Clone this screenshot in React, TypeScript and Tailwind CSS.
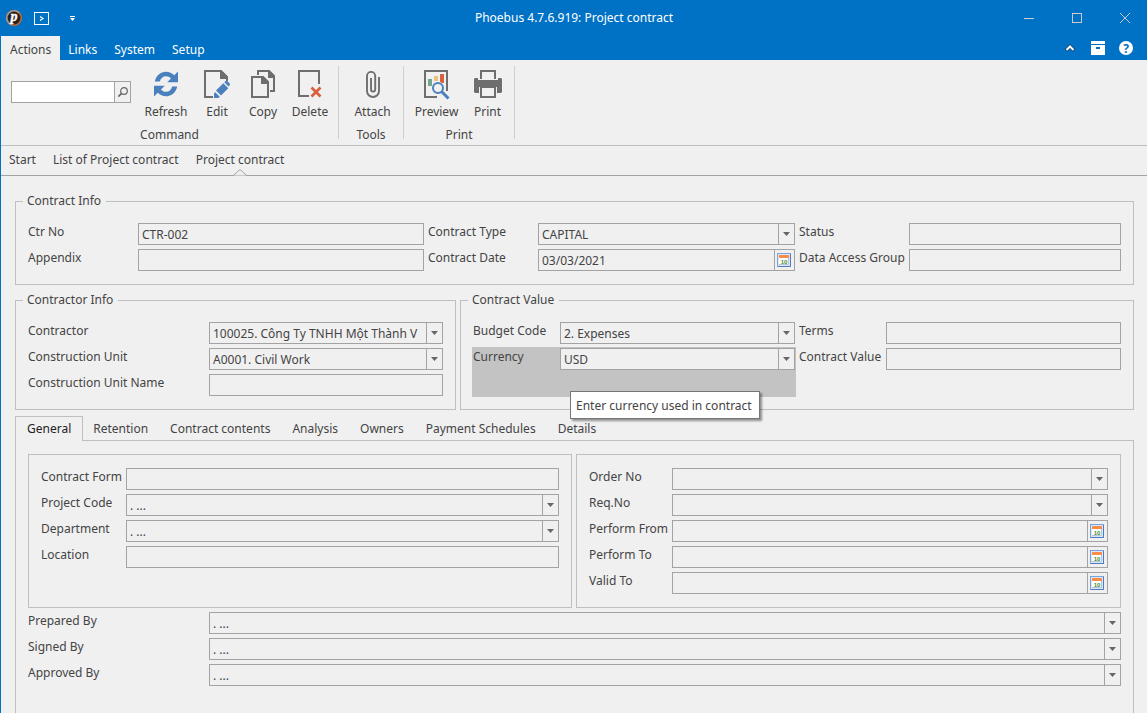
import { useId, useState } from 'react';
import type { ReactNode } from 'react';

const FIELD_BOX = 'h-[22px] w-full border border-[#a3a3a3] bg-[#f0f0f0] px-[3px] text-xs text-[#444]';

/* ---------- icons ---------- */

function LogoIcon() {
  return (
    <svg width="16" height="16" viewBox="0 0 16 16">
      <circle cx="8" cy="8" r="8" fill="#b8683a" />
      <path d="M2.300 13.700A8 8 0 0 1 13.700 2.300z" fill="#a09a94" />
      <circle cx="8" cy="8" r="6.400" fill="#2c211d" />
      <text
        x="8"
        y="11"
        textAnchor="middle"
        fontSize="14"
        fontWeight="700"
        fontStyle="italic"
        fontFamily="Liberation Serif, serif"
        fill="#fff"
        stroke="#fff"
        strokeWidth=".4"
      >
        p
      </text>
    </svg>
  );
}

function RefreshIcon() {
  const arrow =
    'M.8 10.6C2 4.6 6.6.8 12 .8c3.2 0 6 1.2 8.2 3.4L24 .6v10.7H13.2l3.8-3.8C15.7 6 14 5.2 12 5.2c-3 0-5.3 2-6.2 5.4z';
  return (
    <svg width="24" height="28" viewBox="0 -1 24 28" fill="#4a80bb">
      <path d={arrow} />
      <path d={arrow} transform="rotate(180 12 13)" />
    </svg>
  );
}

function EditIcon() {
  return (
    <svg width="26" height="28" viewBox="0 0 26 28">
      <path d="M9 27H1V1h16l6 6v4" fill="none" stroke="#6e6e6e" strokeWidth="2" />
      <path d="M16 0h1l7 7v2h-8z" fill="#6e6e6e" />
      <path d="M10 28v-4l1-2 5 5-2 1zM12 20.5l7.3-7.3 5 5L17 25.500zM20.300 12.200l1-1q1.200-.8 2.200 0l2 2q1 1.200 0 2.200l-1 1z" fill="#4a80bb" />
    </svg>
  );
}

function CopyIcon() {
  return (
    <svg width="24" height="28" viewBox="0 0 24 28" fill="none" stroke="#6e6e6e" strokeWidth="2">
      <path d="M7 5V1h11l5 5v15h-4" />
      <path d="M17 0h1l6 6v2h-7z" fill="#6e6e6e" stroke="none" />
      <path d="M1 7h11l5 5v15H1z" />
      <path d="M10 6h2l6 6v2h-8z" fill="#6e6e6e" stroke="none" />
    </svg>
  );
}

function DeleteIcon() {
  return (
    <svg width="24" height="28" viewBox="0 0 24 28" fill="none">
      <path d="M11 26H1V1h20v13" stroke="#6e6e6e" strokeWidth="2" />
      <path d="m13.500 17.500 9 9m0-9-9 9" stroke="#d9603f" strokeWidth="2.800" />
    </svg>
  );
}

function AttachIcon() {
  return (
    <svg width="14" height="28" viewBox="0 0 14 28" fill="none" stroke="#6e6e6e" strokeWidth="1.900">
      <path d="M5 8v11.500a2 2 0 0 0 4.200 0V6A4.100 4.100 0 0 0 1 6v15a6 6 0 0 0 12 0V7" />
    </svg>
  );
}

function PreviewIcon() {
  return (
    <svg width="26" height="30" viewBox="0 0 26 30">
      <path d="M13 27H1V1h22v20" fill="none" stroke="#6e6e6e" strokeWidth="2" />
      <path d="M4 9h4v7H4z" fill="#74a58f" />
      <path d="M10 6h4v5h-4z" fill="#ebc27c" />
      <path d="M16 4h4v9h-4z" fill="#d9603f" />
      <circle cx="14" cy="18" r="6.500" fill="#f0f0f0" />
      <circle cx="14" cy="18" r="5" fill="#f0f0f0" stroke="#4a80bb" strokeWidth="2" />
      <path d="m17.500 21.500 7 7" stroke="#4a80bb" strokeWidth="3" />
    </svg>
  );
}

function PrintIcon() {
  return (
    <svg width="28" height="28" viewBox="0 0 28 28">
      <path d="M7 9V1h14v8" fill="none" stroke="#6e6e6e" strokeWidth="2" />
      <path d="M1 8h3v2h20V8h3l1 1v13l-1 1h-4v-6H5v6H1l-1-1V9z" fill="#6e6e6e" />
      <path d="M7 17h14v10H7z" fill="#f0f0f0" stroke="#6e6e6e" strokeWidth="2" />
    </svg>
  );
}

function CalendarIcon() {
  return (
    <svg width="14" height="14" viewBox="0 0 14 14">
      <rect x=".5" y=".5" width="13" height="13" fill="#dce7f6" stroke="#7aa3dc" />
      <path d="M13.500 1v12.500H1" fill="none" stroke="#4d7cc4" />
      <rect x="2" y="2" width="10" height="10" fill="#fff" />
      <path d="M11.500 5v6.500H2" fill="none" stroke="#b5c4da" />
      <rect x="2" y="2" width="10" height="3" fill="#fa8d48" />
      <text x="7" y="10.500" textAnchor="middle" fontSize="6" fontWeight="700" fontFamily="Liberation Sans, sans-serif" fill="#3f9030">
        10
      </text>
    </svg>
  );
}

/* ---------- form fields ---------- */

interface FieldProps {
  label: string;
  labelWidth: string;
  value?: string;
  kind?: 'text' | 'select' | 'date';
}

function Field({ label, labelWidth, value = '', kind = 'text' }: FieldProps) {
  const id = useId();

  return (
    <div className="flex h-[22px]">
      <label htmlFor={id} className={`${labelWidth} shrink-0 whitespace-nowrap text-xs leading-[18px]`}>
        {label}
      </label>
      <div className="relative min-w-0 flex-1">
        {kind === 'select' ? (
          <>
            <select id={id} defaultValue={value} className={`${FIELD_BOX} block appearance-none pr-[17px] pt-[2px]`}>
              <option value={value}>{value}</option>
            </select>
            <span className="pointer-events-none absolute inset-y-0 right-0 flex w-[17px] items-center justify-center border border-[#a3a3a3]">
              <svg width="7" height="4" viewBox="0 0 7 4" fill="#666">
                <path d="M0 0h7L3.500 4z" />
              </svg>
            </span>
          </>
        ) : (
          <input id={id} type="text" defaultValue={value} className={FIELD_BOX} />
        )}
        {kind === 'date' && (
          <button
            type="button"
            aria-label={`Pick ${label}`}
            className="absolute inset-y-0 right-0 flex w-[21px] items-center justify-center border border-[#a3a3a3] pr-px"
          >
            <CalendarIcon />
          </button>
        )}
      </div>
    </div>
  );
}

function Group({ title, children }: { title: string; children: ReactNode }) {
  return (
    <fieldset className="min-w-0 border border-[#bfbfbf] pl-[7px]">
      <legend className="pl-1 pr-[5px] text-xs leading-4">{title}</legend>
      <div className="pb-[13px] pl-[5px] pr-3 pt-[14px]">{children}</div>
    </fieldset>
  );
}

/* ---------- ribbon ---------- */

interface RibbonButtonProps {
  label: string;
  width: string;
  icon: ReactNode;
}

function RibbonButton({ label, width, icon }: RibbonButtonProps) {
  return (
    <button type="button" className={`${width} flex flex-col items-center`}>
      <span className="flex h-[30px] items-start">{icon}</span>
      <span className="pt-1 leading-4">{label}</span>
    </button>
  );
}

function RibbonGroup({ title, className, children }: { title: string; className?: string; children: ReactNode }) {
  return (
    <div className={`flex h-[73px] flex-col justify-between border-r border-[#cfcfcf] ${className ?? ''}`}>
      <div className="flex justify-center pl-[3px] pt-1">{children}</div>
      <div className="text-center leading-[8px]">{title}</div>
    </div>
  );
}

function TitleBar() {
  return (
    <div className="grid h-9 grid-cols-[1fr_auto_1fr] items-center text-white">
      <div className="flex items-center pl-[5px]">
        <LogoIcon />
        <button type="button" aria-label="Run" className="ml-3">
          <svg width="15" height="13" viewBox="0 0 15 13" fill="none" stroke="#fff">
            <rect x=".5" y=".5" width="14" height="12" />
            <path d="m6 4.500 3 2-3 2" strokeWidth="1.200" />
          </svg>
        </button>
        <button type="button" aria-label="Customize toolbar" className="ml-[21px]">
          <svg width="5" height="5" viewBox="0 0 5 5" fill="#fff">
            <path d="M0 0h5v1H0zM0 2h5L2.500 5z" />
          </svg>
        </button>
      </div>
      <h1 className="text-xs">Phoebus 4.7.6.919: Project contract</h1>
      <div className="flex items-center justify-end gap-[38px] pr-[17px]">
        <button type="button" aria-label="Minimize">
          <svg width="10" height="10" viewBox="0 0 10 10" stroke="#c8ccd0">
            <path d="M0 5.500h10" />
          </svg>
        </button>
        <button type="button" aria-label="Maximize">
          <svg width="10" height="10" viewBox="0 0 10 10" fill="none" stroke="#c8ccd0">
            <rect x=".5" y=".5" width="9" height="9" />
          </svg>
        </button>
        <button type="button" aria-label="Close">
          <svg width="10" height="10" viewBox="0 0 10 10" stroke="#c8ccd0">
            <path d="m0 0 10 10M10 0 0 10" />
          </svg>
        </button>
      </div>
    </div>
  );
}

function RibbonTabs() {
  const [active, setActive] = useState('Actions');

  return (
    <div className="flex h-6 justify-between">
      <nav className="flex">
        {['Actions', 'Links', 'System', 'Setup'].map((tab) => (
          <button
            key={tab}
            type="button"
            onClick={() => setActive(tab)}
            className={`pt-[3px] ${tab === active ? 'bg-[#f0f0f0] px-[9px] text-[#444]' : 'pl-2 pr-[9px] text-white'}`}
          >
            {tab}
          </button>
        ))}
      </nav>
      <div className="flex items-center pr-[14px]">
        <button type="button" aria-label="Collapse ribbon">
          <svg width="10" height="8" viewBox="0 0 10 8" fill="none">
            <path d="m1 6.500 4-4 4 4" stroke="#12436e" strokeWidth="3.500" />
            <path d="m1.500 6 3.500-3.500L8.500 6" stroke="#fff" strokeWidth="2" />
          </svg>
        </button>
        <button type="button" aria-label="Window layout" className="ml-4">
          <svg width="14" height="14" viewBox="0 0 14 14" fill="#fff">
            <path d="M0 0h14v3H0zM0 4h14v10H0zM5 6v2h4V6z" fillRule="evenodd" />
          </svg>
        </button>
        <button type="button" aria-label="Help" className="ml-[14px]">
          <svg width="14" height="14" viewBox="0 0 14 14">
            <circle cx="7" cy="7" r="7" fill="#fff" />
            <text x="7" y="11.500" textAnchor="middle" fontSize="12" fontWeight="700" fontFamily="Noto Sans, sans-serif" fill="#0072c6">
              ?
            </text>
          </svg>
        </button>
      </div>
    </div>
  );
}

function Ribbon() {
  return (
    <div className="flex h-[86px] border-b border-[#bfbfbf] pt-[6px]">
      <RibbonGroup title="Command" className="w-[338px]">
        <div className="ml-[3px] mr-[7px] mt-[11px] flex h-[22px] w-[120px] border border-[#a3a3a3]">
          <input type="text" aria-label="Search" className="min-w-0 flex-1 bg-white px-[3px]" />
          <button type="button" aria-label="Find" className="flex w-4 items-center justify-center border-l border-[#a3a3a3]">
            <svg width="10" height="10" viewBox="0 0 10 10" fill="none" stroke="#666">
              <circle cx="6" cy="4" r="3.300" strokeWidth="1.200" />
              <path d="M3.600 6.400.4 9.600" strokeWidth="1.600" />
            </svg>
          </button>
        </div>
        <RibbonButton label="Refresh" width="w-[56px]" icon={<RefreshIcon />} />
        <RibbonButton label="Edit" width="w-[46px]" icon={<EditIcon />} />
        <RibbonButton label="Copy" width="w-[46px]" icon={<CopyIcon />} />
        <RibbonButton label="Delete" width="w-[48px]" icon={<DeleteIcon />} />
      </RibbonGroup>
      <RibbonGroup title="Tools" className="w-[65px]">
        <RibbonButton label="Attach" width="w-[54px]" icon={<AttachIcon />} />
      </RibbonGroup>
      <RibbonGroup title="Print" className="w-[111px]">
        <RibbonButton label="Preview" width="w-[54px]" icon={<PreviewIcon />} />
        <RibbonButton label="Print" width="w-[48px]" icon={<PrintIcon />} />
      </RibbonGroup>
    </div>
  );
}

function Breadcrumb() {
  return (
    <nav className="flex h-[30px] gap-[17px] border-b border-[#a3a3a3] pl-2 leading-[27px]">
      <a href="#start">Start</a>
      <a href="#list">List of Project contract</a>
      <a href="#contract" className="relative">
        Project contract
        <svg
          className="absolute -bottom-px left-1/2 -translate-x-1/2"
          width="14"
          height="7"
          viewBox="0 0 14 7"
          fill="#f0f0f0"
          stroke="#a3a3a3"
        >
          <path d="M0 6.500 1 6l6-5.500L13 6l1 .5" />
        </svg>
      </a>
    </nav>
  );
}

/* ---------- detail tabs ---------- */

const TABS = ['General', 'Retention', 'Contract contents', 'Analysis', 'Owners', 'Payment Schedules', 'Details'];

function DetailTabs() {
  const [active, setActive] = useState('General');

  return (
    <div className="mt-[6px] flex flex-1 flex-col">
      <div className="flex h-[25px]" role="tablist">
        {TABS.map((tab) => (
          <button
            key={tab}
            type="button"
            role="tab"
            aria-selected={tab === active}
            onClick={() => setActive(tab)}
            className={
              tab === active
                ? 'z-10 border border-b-0 border-[#bfbfbf] bg-[#f0f0f0] px-[11px] leading-[22px] text-[#222]'
                : 'pl-[10px] pr-3 leading-6'
            }
          >
            {tab}
          </button>
        ))}
      </div>
      <div className="-mt-px flex-1 border border-b-0 border-[#bfbfbf] px-3 pt-[13px]">
        <div className="grid grid-cols-[544fr_545fr] gap-1">
          <div className="flex flex-col gap-1 border border-[#bfbfbf] px-3 py-[13px]">
            <Field label="Contract Form" labelWidth="w-[85px]" />
            <Field label="Project Code" labelWidth="w-[85px]" kind="select" value=". ..." />
            <Field label="Department" labelWidth="w-[85px]" kind="select" value=". ..." />
            <Field label="Location" labelWidth="w-[85px]" />
          </div>
          <div className="flex flex-col gap-1 border border-[#bfbfbf] px-3 py-[13px]">
            <Field label="Order No" labelWidth="w-[83px]" kind="select" />
            <Field label="Req.No" labelWidth="w-[83px]" kind="select" />
            <Field label="Perform From" labelWidth="w-[83px]" kind="date" />
            <Field label="Perform To" labelWidth="w-[83px]" kind="date" />
            <Field label="Valid To" labelWidth="w-[83px]" kind="date" />
          </div>
        </div>
        <div className="mt-1 flex flex-col gap-1">
          <Field label="Prepared By" labelWidth="w-[181px]" kind="select" value=". ..." />
          <Field label="Signed By" labelWidth="w-[181px]" kind="select" value=". ..." />
          <Field label="Approved By" labelWidth="w-[181px]" kind="select" value=". ..." />
        </div>
      </div>
    </div>
  );
}

export default function App() {
  return (
    <div className="flex min-h-screen flex-col border-l border-[#0072c6] bg-[#f0f0f0] font-['Noto_Sans',sans-serif] text-xs text-[#444]">
      <header className="bg-[#0072c6]">
        <TitleBar />
        <RibbonTabs />
      </header>
      <Ribbon />
      <Breadcrumb />

      <main className="flex flex-1 flex-col pl-[14px] pr-[13px] pt-[17px]">
        <Group title="Contract Info">
          <div className="grid grid-cols-[396fr_367fr_322fr] gap-1">
            <Field label="Ctr No" labelWidth="w-[110px]" value="CTR-002" />
            <Field label="Contract Type" labelWidth="w-[110px]" kind="select" value="CAPITAL" />
            <Field label="Status" labelWidth="w-[110px]" />
            <Field label="Appendix" labelWidth="w-[110px]" />
            <Field label="Contract Date" labelWidth="w-[110px]" kind="date" value="03/03/2021" />
            <Field label="Data Access Group" labelWidth="w-[110px]" />
          </div>
        </Group>

        <div className="mt-[7px] grid grid-cols-[441fr_674fr] gap-1">
          <Group title="Contractor Info">
            <div className="flex flex-col gap-1">
              <Field label="Contractor" labelWidth="w-[181px]" kind="select" value="100025. Công Ty TNHH Một Thành V" />
              <Field label="Construction Unit" labelWidth="w-[181px]" kind="select" value="A0001. Civil Work" />
              <Field label="Construction Unit Name" labelWidth="w-[181px]" />
            </div>
          </Group>
          <Group title="Contract Value">
            <div className="grid grid-cols-2 gap-1">
              <Field label="Budget Code" labelWidth="w-[87px]" kind="select" value="2. Expenses" />
              <Field label="Terms" labelWidth="w-[87px]" />
              {/* hovered cell with its hint */}
              <div className="relative -m-px h-[50px] bg-[#c3c3c3] p-px">
                <Field label="Currency" labelWidth="w-[87px]" kind="select" value="USD" />
                <div
                  role="tooltip"
                  className="absolute left-[98px] top-11 z-20 whitespace-nowrap border border-[#767676] bg-white pl-[5px] pr-[7px] pt-[2px] leading-6 shadow-[2px_2px_2px_rgba(0,0,0,0.4)]"
                >
                  Enter currency used in contract
                </div>
              </div>
              <Field label="Contract Value" labelWidth="w-[87px]" />
            </div>
          </Group>
        </div>

        <DetailTabs />
      </main>
    </div>
  );
}
